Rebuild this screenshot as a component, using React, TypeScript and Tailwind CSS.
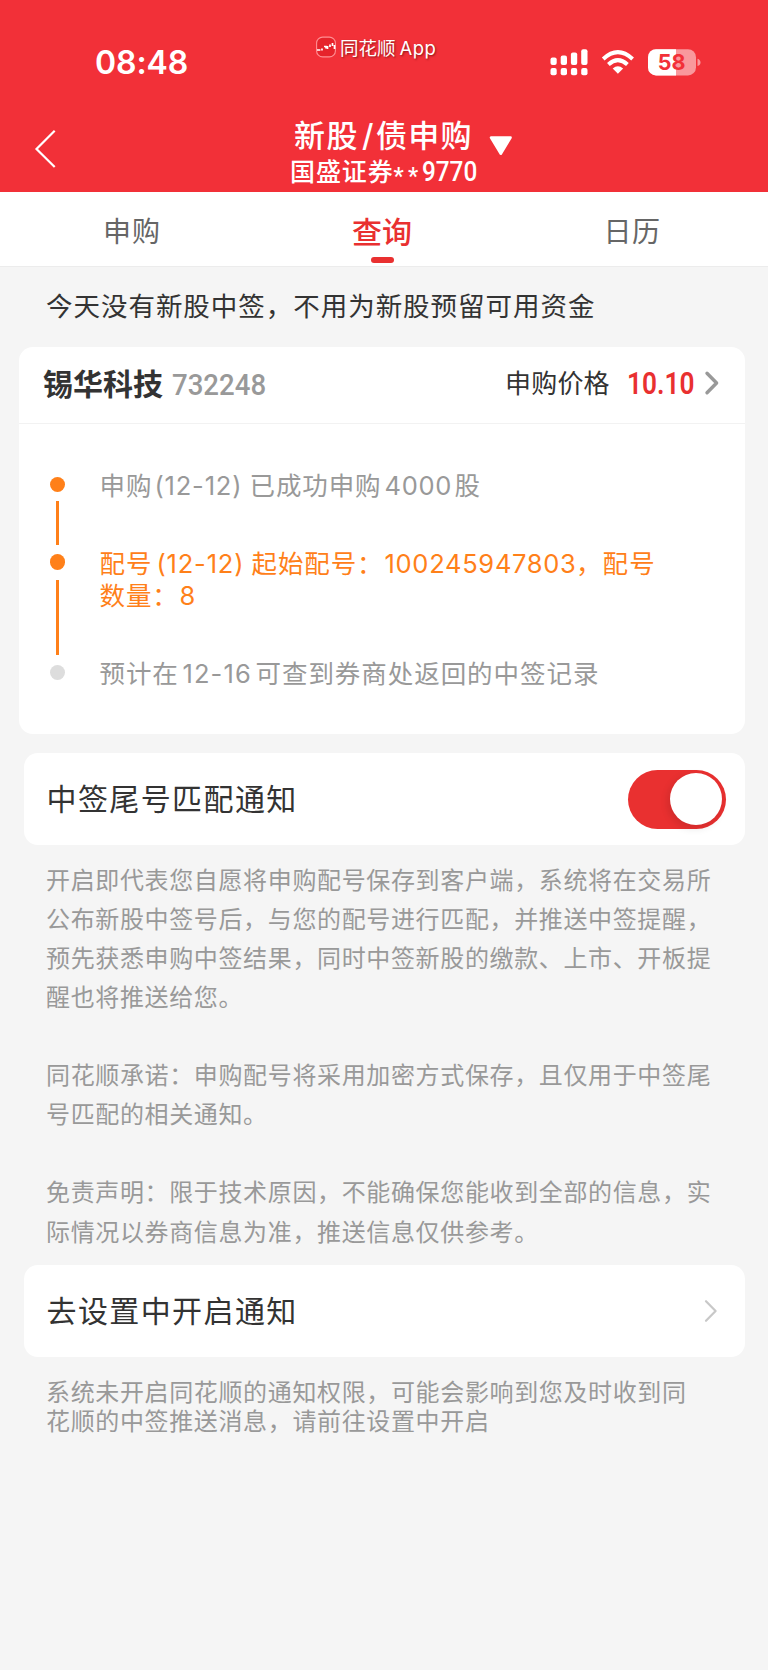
import React from "react";

const cjk = "font-[Inter,'Noto_Sans_CJK_SC',sans-serif]";

function StatusBar() {
  return (
    <div className="flex h-[100px] items-start text-white">
      <div className="ml-[95px] mt-[43px] w-[221px] text-[32px] font-semibold leading-[40px] tracking-[-0.1px]">08:48</div>
      <div className="mt-[36px] flex w-[234px] items-start">
        <svg width="20" height="22" viewBox="0 0 20 22" fill="none">
          <rect x="0.6" y="1.1" width="18.8" height="19.8" rx="6" fill="#e6232b" stroke="#ff8f93" strokeWidth="1.100" />
          <path d="M1 14h3.4M6 14.500v-2M8 10.500h2v2M11.500 13v-3M14 11V8.500M16.500 7v3M18.500 9v4" stroke="#fff" strokeWidth="1.700" />
        </svg>
        <div className="ml-[4px] flex items-baseline text-[18.500px] leading-[24px] [text-shadow:1px_1px_2px_rgba(80,0,0,0.6)]">
          <span>同花顺</span>
          <span className="ml-[4px] text-[18.500px] tracking-[0.4px]">App</span>
        </div>
      </div>
      <svg className="mt-[49px]" width="154" height="27" viewBox="0 0 154 27" fill="#fff">
        <rect x="0.500" y="8.500" width="6.200" height="7.500" rx="2" />
        <rect x="10.700" y="6.500" width="6.300" height="9.500" rx="2" />
        <rect x="20.900" y="3.500" width="6.300" height="12.500" rx="2" />
        <rect x="31.200" y="0.300" width="6.300" height="15.700" rx="2" />
        <rect x="0.500" y="19" width="6.200" height="7.200" rx="2" />
        <rect x="10.700" y="19" width="6.300" height="7.200" rx="2" />
        <rect x="20.900" y="19" width="6.300" height="7.200" rx="2" />
        <rect x="31.200" y="19" width="6.300" height="7.200" rx="2" />
        <g fill="none" stroke="#fff" strokeWidth="4">
          <path d="M53.200 10Q67.900 -3.600 82.600 10" />
          <path d="M58.400 15.500Q67.900 6.800 77.400 15.500" />
        </g>
        <path d="M62.700 19.400Q67.900 15.200 73.100 19.400L67.900 24.700Z" />
        <clipPath id="level">
          <rect x="98" y="0" width="28" height="27" />
        </clipPath>
        <rect x="98" y="0.200" width="48" height="26.200" rx="8" opacity="0.500" />
        <rect x="98" y="0.200" width="48" height="26.200" rx="8" clipPath="url(#level)" />
        <path d="M147.500 9.700q3 1 3 3.700t-3 3.700Z" opacity="0.500" />
        <text x="121.700" y="20.800" textAnchor="middle" fill="#f23038" fontSize="21.500" fontWeight="700" fontFamily="Inter, sans-serif">
          58
        </text>
      </svg>
    </div>
  );
}

function NavBar() {
  return (
    <div className="flex h-[92px] items-start text-white">
      <svg className="ml-[34px] mt-[29px]" width="23" height="40" viewBox="0 0 23 40" fill="none" stroke="#fff" strokeWidth="2.200">
        <path d="M20.700 1.800L2.500 20l18.200 18" />
      </svg>
      <div className="ml-[233px] mt-[17px] w-[190px]">
        <div className="flex h-[38px] items-center pl-[4px] text-[31px] font-medium leading-[38px]">
          <span className="w-[68px] whitespace-nowrap tracking-[1.500px]">新股</span>
          <span className="w-[14px]">/</span>
          <span className="whitespace-nowrap tracking-[1.2px]">债申购</span>
        </div>
        <div className="flex h-[35px] items-center text-[25px] font-medium leading-[35px]">
          <span className="w-[106.500px] whitespace-nowrap tracking-[0.9px]">国盛证券</span>
          <span className="w-[28px] whitespace-nowrap pt-[8px] font-[Roboto,sans-serif] text-[23px] tracking-[4.200px]">**</span>
          <span className="origin-left scale-x-[0.9] font-[Roboto,sans-serif] text-[27px]">9770</span>
        </div>
      </div>
      <svg className="ml-[8px] mt-[35px]" width="26" height="22" viewBox="0 0 26 22">
        <path d="M3 2.500h19.600L12.800 18.800Z" fill="#fff" stroke="#fff" strokeWidth="2.500" strokeLinejoin="round" />
      </svg>
    </div>
  );
}

function Tabs() {
  return (
    <div className="flex h-[75px] border-b border-[#ececec] bg-white text-[28px] leading-[40px] text-[#666]">
      <div className="w-[256px] pl-[103px] pt-[20px] tracking-[1px]">申购</div>
      <div className="flex w-[256px] flex-col items-center pr-[4px] pt-[19.500px] text-[30px] font-medium text-[#e93030]">
        <span>查询</span>
        <span className="mt-[5px] h-[6px] w-[23px] rounded-[3px] bg-[#e93030]" />
      </div>
      <div className="w-[256px] pl-[91.500px] pt-[20px] tracking-[0.5px]">日历</div>
    </div>
  );
}

function Chevron({ color, stroke, className }: { color: string; stroke: number; className?: string }) {
  return (
    <svg className={className} width="16" height="26" viewBox="0 0 16 26" fill="none" stroke={color} strokeWidth={stroke} strokeLinecap="round" strokeLinejoin="round">
      <path d="M3 3.200L12.600 13 3 22.800" />
    </svg>
  );
}

function Dot({ color }: { color: string }) {
  return <span className={`h-[15.500px] w-[15.500px] shrink-0 rounded-full ${color}`} />;
}

function StockCard() {
  return (
    <section className="ml-[19px] mr-[23px] h-[387px] rounded-[14px] bg-white">
      <div className="flex h-[77px] items-center border-b border-[#f2f2f2] pb-[3px] pl-[24px] text-[#333]">
        <span className="w-[129px] whitespace-nowrap text-[30px] font-bold leading-[40px]">锡华科技</span>
        <span className="w-[333px] origin-left scale-x-[0.92] pt-[2px] font-[Roboto,sans-serif] text-[30px] font-medium leading-[40px] text-[#999]">732248</span>
        <span className="w-[122px] whitespace-nowrap text-[26px] leading-[40px] tracking-[0.2px]">申购价格</span>
        <span className="w-[75px] origin-left scale-x-[0.86] font-[Roboto,sans-serif] text-[30.500px] font-semibold leading-[40px] text-[#e93030]">10.10</span>
        <Chevron color="#999" stroke={3.4} className="ml-[2px] mt-[-2px]" />
      </div>
      <div className="flex pl-[30.500px]">
        <div className="flex h-[256px] w-[16px] flex-col items-center pt-[52.500px]">
          <Dot color="bg-[#ff8019]" />
          <span className="my-[9px] h-[44px] w-[2.500px] shrink-0 bg-[#ff8019]" />
          <Dot color="bg-[#ff8019]" />
          <span className="mb-[10px] mt-[10px] h-[75px] w-[2.500px] shrink-0 bg-[#ff8019]" />
          <Dot color="bg-[#ddd]" />
        </div>
        <div className="ml-[34px] pt-[45.500px] text-[25.500px] leading-[31.500px] tracking-[0.9px] text-[#999]">
          <p className="flex whitespace-nowrap">
            <span className="w-[55px]">申购</span>
            <span className="w-[95px] tracking-[0.800px]">(12-12)</span>
            <span className="w-[135px]">已成功申购</span>
            <span className="w-[70px] tracking-[0.700px]">4000</span>
            <span>股</span>
          </p>
          <div className="mt-[47px] text-[#ff8019]">
            <p className="flex whitespace-nowrap">
              <span className="w-[57px]">配号</span>
              <span className="w-[95px] tracking-[0.800px]">(12-12)</span>
              <span className="w-[133px]">起始配号：</span>
              <span className="w-[191.500px] tracking-[0.700px]">100245947803</span>
              <span className="tracking-[1.100px]">，配号</span>
            </p>
            <p className="flex whitespace-nowrap">
              <span className="w-[80px]">数量：</span>
              <span>8</span>
            </p>
          </div>
          <p className="mt-[47px] flex whitespace-nowrap">
            <span className="w-[83px]">预计在</span>
            <span className="w-[73px] tracking-[1.100px]">12-16</span>
            <span className="tracking-[0.950px]">可查到券商处返回的中签记录</span>
          </p>
        </div>
      </div>
    </section>
  );
}

export default function App() {
  return (
    <main className={`h-[1670px] w-[768px] overflow-hidden bg-[#f5f5f5] ${cjk}`}>
      <header className="h-[192px] bg-[#f23038]">
        <StatusBar />
        <NavBar />
      </header>
      <Tabs />
      <p className="flex h-[80px] items-center pl-[46px] text-[26.500px] tracking-[0.970px] text-[#333]">今天没有新股中签，不用为新股预留可用资金</p>
      <StockCard />
      <section className="ml-[23.500px] mr-[23px] mt-[19px] flex h-[92px] items-center justify-between rounded-[14px] bg-white pl-[23px] pr-[19.500px]">
        <span className="text-[30px] tracking-[1.400px] text-[#333]">中签尾号匹配通知</span>
        <span className="flex h-[59px] w-[98px] items-center justify-end rounded-full bg-[#e93030] pr-[4px]">
          <span className="h-[52px] w-[52px] rounded-full bg-white shadow-[-2px_3px_8px_rgba(0,0,0,0.12)]" />
        </span>
      </section>
      <div className="h-[420px] whitespace-nowrap pl-[46px] pt-[15.500px] text-[24px] leading-[39.150px] tracking-[0.640px] text-[#999]">
        <p>
          开启即代表您自愿将申购配号保存到客户端，系统将在交易所
          <br />
          公布新股中签号后，与您的配号进行匹配，并推送中签提醒，
          <br />
          预先获悉申购中签结果，同时中签新股的缴款、上市、开板提
          <br />
          醒也将推送给您。
        </p>
        <p className="mt-[39px]">
          同花顺承诺：申购配号将采用加密方式保存，且仅用于中签尾
          <br />
          号匹配的相关通知。
        </p>
        <p className="mt-[39px]">
          免责声明：限于技术原因，不能确保您能收到全部的信息，实
          <br />
          际情况以券商信息为准，推送信息仅供参考。
        </p>
      </div>
      <section className="ml-[23.500px] mr-[23px] flex h-[92px] items-center justify-between rounded-[14px] bg-white pl-[23px] pr-[26px]">
        <span className="text-[30px] tracking-[1.400px] text-[#333]">去设置中开启通知</span>
        <Chevron color="#c8c8c8" stroke={2.2} />
      </section>
      <p className="whitespace-nowrap pl-[46px] pt-[20.500px] text-[24px] leading-[29.300px] tracking-[0.640px] text-[#999]">
        系统未开启同花顺的通知权限，可能会影响到您及时收到同
        <br />
        花顺的中签推送消息，请前往设置中开启
      </p>
    </main>
  );
}
